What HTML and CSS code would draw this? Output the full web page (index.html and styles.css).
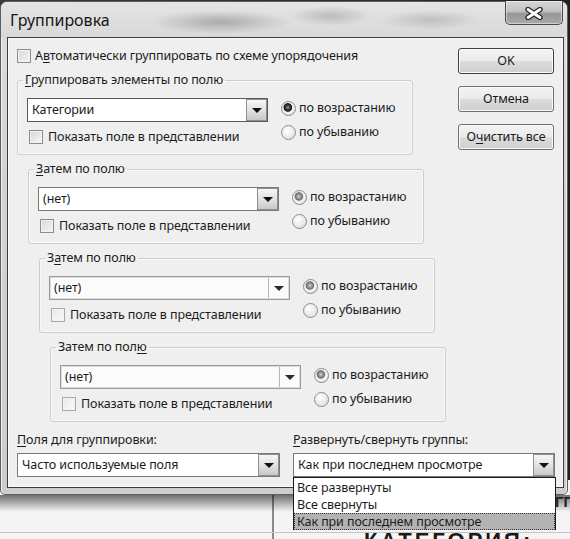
FILE: index.html
```html
<!DOCTYPE html>
<html lang="ru">
<head>
<meta charset="utf-8">
<title>Группировка</title>
<link rel="stylesheet" href="styles.css">
</head>
<body>
<div class="desk">
  <div class="sheet"></div>
  <div class="sheet-text">КАТЕГОРИЯ: (НЕТ)</div>
  <div class="sheet-side">ГП</div>

  <div class="window">
    <div class="titlebar">
      <span class="title">Группировка</span>
      <button class="close" type="button" aria-label="Закрыть">
        <svg width="18" height="13" viewBox="0 0 18 13">
          <path d="M3 2.5 L15 10.5 M15 2.5 L3 10.5" stroke="#2a2a2a" stroke-width="5.4" stroke-linecap="round" fill="none"/>
          <path d="M3 2.5 L15 10.5 M15 2.5 L3 10.5" stroke="#ffffff" stroke-width="2.8" stroke-linecap="round" fill="none"/>
        </svg>
      </button>
    </div>

    <div class="client">
      <div class="top">
        <div class="main">
          <label class="check auto"><span class="box"></span><span>А<u>в</u>томатически группировать по схеме упорядочения</span></label>

          <fieldset class="group g1">
            <legend><u>Г</u>руппировать элементы по полю</legend>
            <div class="group-body">
              <div class="field">
                <div class="combo strong"><span class="val">Категории</span><span class="drop"><i class="tri"></i></span></div>
                <label class="check"><span class="box"></span><span>Показать поле в представлении</span></label>
              </div>
              <div class="radios">
                <label class="radio"><span class="dot on dark"></span>по возрастанию</label>
                <label class="radio"><span class="dot"></span>по убыванию</label>
              </div>
            </div>
          </fieldset>

          <fieldset class="group g2">
            <legend><u>З</u>атем по полю</legend>
            <div class="group-body">
              <div class="field">
                <div class="combo"><span class="val">(нет)</span><span class="drop"><i class="tri"></i></span></div>
                <label class="check"><span class="box"></span><span>Показать поле в представлении</span></label>
              </div>
              <div class="radios">
                <label class="radio"><span class="dot on"></span>по возрастанию</label>
                <label class="radio"><span class="dot"></span>по убыванию</label>
              </div>
            </div>
          </fieldset>

          <fieldset class="group g3">
            <legend>З<u>а</u>тем по полю</legend>
            <div class="group-body">
              <div class="field">
                <div class="combo flat"><span class="val">(нет)</span><span class="drop"><i class="tri"></i></span></div>
                <label class="check"><span class="box light"></span><span>Показать поле в представлении</span></label>
              </div>
              <div class="radios">
                <label class="radio"><span class="dot on"></span>по возрастанию</label>
                <label class="radio"><span class="dot"></span>по убыванию</label>
              </div>
            </div>
          </fieldset>

          <fieldset class="group g4">
            <legend>Затем по пол<u>ю</u></legend>
            <div class="group-body">
              <div class="field">
                <div class="combo flat"><span class="val">(нет)</span><span class="drop"><i class="tri"></i></span></div>
                <label class="check"><span class="box light"></span><span>Показать поле в представлении</span></label>
              </div>
              <div class="radios">
                <label class="radio"><span class="dot on"></span>по возрастанию</label>
                <label class="radio"><span class="dot"></span>по убыванию</label>
              </div>
            </div>
          </fieldset>
        </div>

        <div class="buttons">
          <button class="push default" type="button">OK</button>
          <button class="push" type="button">Отмена</button>
          <button class="push" type="button">О<u>ч</u>истить все</button>
        </div>
      </div>

      <div class="bottom">
        <div class="pick">
          <div class="lbl"><u>П</u>оля для группировки:</div>
          <div class="combo"><span class="val">Часто используемые поля</span><span class="drop"><i class="tri"></i></span></div>
        </div>
        <div class="pick">
          <div class="lbl"><u>Р</u>азвернуть/свернуть группы:</div>
          <div class="combo-wrap">
            <div class="combo"><span class="val">Как при последнем просмотре</span><span class="drop"><i class="tri"></i></span></div>
            <ul class="list">
              <li>Все развернуты</li>
              <li>Все свернуты</li>
              <li class="sel">Как при последнем просмотре</li>
            </ul>
          </div>
        </div>
      </div>
    </div>
  </div>
</div>
</body>
</html>
```

FILE: styles.css
```css
* { box-sizing: border-box; }
html, body { margin: 0; padding: 0; }
body {
  width: 570px;
  height: 539px;
  overflow: hidden;
  font-family: "Noto Sans", "Open Sans", "DejaVu Sans", sans-serif;
  font-size: 12.5px;
  letter-spacing: -0.1px;
  line-height: 16px;
  color: #1c1c1c;
}
u { text-decoration: underline; text-underline-offset: 2px; text-decoration-thickness: 1px; }

.desk {
  position: relative;
  width: 570px;
  height: 539px;
  overflow: hidden;
  background: linear-gradient(90deg, #3a3a3a, #222);
}

/* spreadsheet seen under the window */
.sheet {
  position: absolute;
  left: 0;
  top: 480px;
  width: 570px;
  height: 59px;
  background:
    linear-gradient(rgba(0,0,0,0) 0, rgba(0,0,0,0) 15px, rgba(0,0,0,.55) 15px, rgba(0,0,0,0) 32px),
    linear-gradient(transparent 52px, #c4c4c4 52px, #c4c4c4 53px, transparent 53px),
    linear-gradient(90deg, transparent 272px, #8a8a8a 272px, #8a8a8a 274px, transparent 274px),
    repeating-linear-gradient(90deg, transparent 0, transparent 56px, #d0d0d0 56px, #d0d0d0 57px, transparent 57px, transparent 54px),
    #f5f5f5;
  background-size: 100% 100%, 100% 100%, 100% 100%, 54px 100%, auto;
  background-position: 0 0, 0 0, 0 0, 3px 0, 0 0;
}
.sheet-text {
  position: absolute;
  left: 364px;
  top: 530px;
  font-family: "Liberation Sans", sans-serif;
  font-size: 22px;
  line-height: 22px;
  font-weight: bold;
  letter-spacing: 3px;
  color: #1a1a1a;
}
.sheet-side {
  position: absolute;
  left: 555px;
  top: 494px;
  font-family: "Liberation Sans", sans-serif;
  font-size: 15px;
  font-weight: bold;
  letter-spacing: 0;
  color: #222;
}

/* window */
.window {
  position: absolute;
  left: 0;
  top: 1px;
  width: 568px;
  height: 494px;
  display: flex;
  flex-direction: column;
  padding: 0 3px 6px 6px;
  border: 1px solid #5e5e5e;
  border-radius: 7px 7px 5px 5px;
  background: linear-gradient(#dedede, #d2d2d2 40%, #cdcdcd);
  box-shadow: inset 1px 0 0 #f0f0f0, inset -1px 0 0 #eeeeee;
}
.titlebar {
  height: 35px;
  flex: none;
  display: flex;
  align-items: flex-start;
  margin: 0 -3px 0 -6px;
  padding-left: 9px;
  border-radius: 6px 6px 0 0;
  background:
    radial-gradient(ellipse 70px 12px at 220px 20px, rgba(110,110,110,.45), rgba(110,110,110,0)),
    radial-gradient(ellipse 40px 10px at 330px 14px, rgba(120,120,120,.35), rgba(120,120,120,0)),
    radial-gradient(ellipse 50px 10px at 430px 18px, rgba(120,120,120,.3), rgba(120,120,120,0)),
    linear-gradient(#e4e4e4, #d9d9d9);
}
.title {
  font-size: 16px;
  letter-spacing: 0;
  line-height: 20px;
  margin-top: 8px;
  color: #161616;
}
.close {
  margin-left: auto;
  margin-right: 4px;
  margin-top: -1px;
  width: 58px;
  height: 24px;
  padding: 0;
  display: flex;
  align-items: center;
  justify-content: center;
  border: 1px solid #4a4a4a;
  border-top: none;
  border-radius: 0 0 5px 5px;
  background: linear-gradient(#d6d6d6 0%, #c2c2c2 45%, #979797 55%, #a9a9a9 100%);
  box-shadow: inset 0 0 0 1px rgba(255,255,255,.45);
}
.close svg { display: block; margin-top: 1px; }

.client {
  flex: none;
  height: 451px;
  border: 1px solid #3b3b3b;
  background: #efefef;
  box-shadow: inset 0 0 0 1px #fbfbfb;
  padding: 10px 9px 8px 9px;
  display: flex;
  flex-direction: column;
}
.top { display: flex; }
.main { flex: 1; min-width: 0; }

/* checkbox rows */
.check {
  display: flex;
  align-items: center;
  height: 16px;
  white-space: nowrap;
}
.box {
  flex: none;
  width: 14px;
  height: 14px;
  margin-right: 4px;
  border: 1px solid #8c8c8c;
  background: linear-gradient(135deg, #d6d6d6, #f7f7f7);
  box-shadow: inset 0 0 0 1px #f3f3f3;
}
.box.light { border-color: #a9a9a9; background: linear-gradient(135deg, #e6e6e6, #fbfbfb); }

/* groups */
.group {
  margin: 8px 0 0 0;
  padding: 10px 10px 9px 9px;
  width: 396px;
  min-inline-size: 0;
  border: 1px solid #cdcdcd;
  border-radius: 3px;
  box-shadow: inset 0 0 0 1px #f8f8f8;
}
.group legend {
  padding: 0 2px;
  margin-left: -4px;
  line-height: 16px;
}
.g2 { margin-top: 6px; margin-left: 11px; }
.g3 { margin-top: 6px; margin-left: 22px; }
.g4 { margin-top: 6px; margin-left: 33px; }
.group-body { display: flex; align-items: flex-start; }
.field { width: 241px; flex: none; }
.field .check { margin-top: 7px; padding-left: 2px; }
.field .check .box { margin-right: 5px; }

/* combos */
.combo {
  display: flex;
  height: 24px;
  border: 1px solid #7a7a7a;
  background: #fff;
}
.combo.strong { border-color: #5a5a5a; }
.combo .val {
  flex: 1;
  padding-left: 4px;
  line-height: 22px;
  white-space: nowrap;
  overflow: hidden;
}
.drop {
  flex: none;
  width: 21px;
  height: 22px;
  display: flex;
  align-items: center;
  justify-content: center;
  border: 1px solid #8e8e8e;
  background: linear-gradient(#f6f6f6, #e2e2e2 50%, #c9c9c9);
}
.tri {
  width: 0;
  height: 0;
  border-left: 5px solid transparent;
  border-right: 5px solid transparent;
  border-top: 5px solid #111;
  margin-top: 1px;
}
.combo.flat { border: 1px solid #9a9a9a; box-shadow: inset 0 0 0 1px #dcdcdc; background: #fbfbfb; }
.combo.flat .drop { border: none; border-left: 1px solid #b5b5b5; background: #fbfbfb; width: 20px; margin: 1px 1px 1px 0; height: 20px; }
.combo.flat .tri { border-top-color: #2a2a2a; }

/* radios */
.radios {
  margin: 2px 0 0 13px;
  display: flex;
  flex-direction: column;
  gap: 8px;
}
.radio {
  display: flex;
  align-items: center;
  height: 16px;
  white-space: nowrap;
}
.dot {
  flex: none;
  width: 15px;
  height: 15px;
  margin-right: 3px;
  border-radius: 50%;
  border: 1px solid #8c8c8c;
  background: radial-gradient(circle at 40% 35%, #ffffff, #e4e4e4 70%, #d4d4d4);
}
.dot.on {
  background: radial-gradient(circle at 45% 42%, #d2d2d2 0, #8a8a8a 2.5px, #6e6e6e 3.8px, #e9e9e9 4.6px, #f7f7f7 6px, #dcdcdc 7.5px);
}
.dot.on.dark {
  background: radial-gradient(circle at 45% 42%, #9a9a9a 0, #2e2e2e 2.5px, #1a1a1a 3.9px, #e9e9e9 4.7px, #f7f7f7 6px, #dcdcdc 7.5px);
}

/* push buttons */
.buttons {
  flex: none;
  width: 96px;
  display: flex;
  flex-direction: column;
  gap: 12px;
}
.push {
  width: 96px;
  height: 26px;
  padding: 0;
  font: inherit;
  letter-spacing: inherit;
  color: #1a1a1a;
  border: 1px solid #6f6f6f;
  border-radius: 3px;
  background: linear-gradient(#f3f3f3 0%, #ebebeb 48%, #dcdcdc 52%, #cfcfcf 100%);
  box-shadow: inset 0 0 0 1px #fbfbfb;
}
.push.default { border-color: #3f3f3f; }

/* bottom pickers */
.bottom {
  margin-top: 10px;
  display: grid;
  grid-template-columns: 263px 262px;
  column-gap: 13px;
}
.lbl { height: 16px; margin-bottom: 5px; white-space: nowrap; }
.combo-wrap { position: relative; }
.list {
  position: absolute;
  left: 0;
  top: 100%;
  width: 263px;
  height: 53px;
  margin: 0;
  padding: 1px 0 0 0;
  list-style: none;
  background: #fff;
  border: 1px solid #1a1a1a;
  z-index: 2;
}
.list li {
  height: 17px;
  line-height: 17px;
  padding-left: 3px;
  white-space: nowrap;
}
.list li.sel {
  background: #b3b3b3;
  outline: 1px dotted #333;
  outline-offset: -1px;
}
```
